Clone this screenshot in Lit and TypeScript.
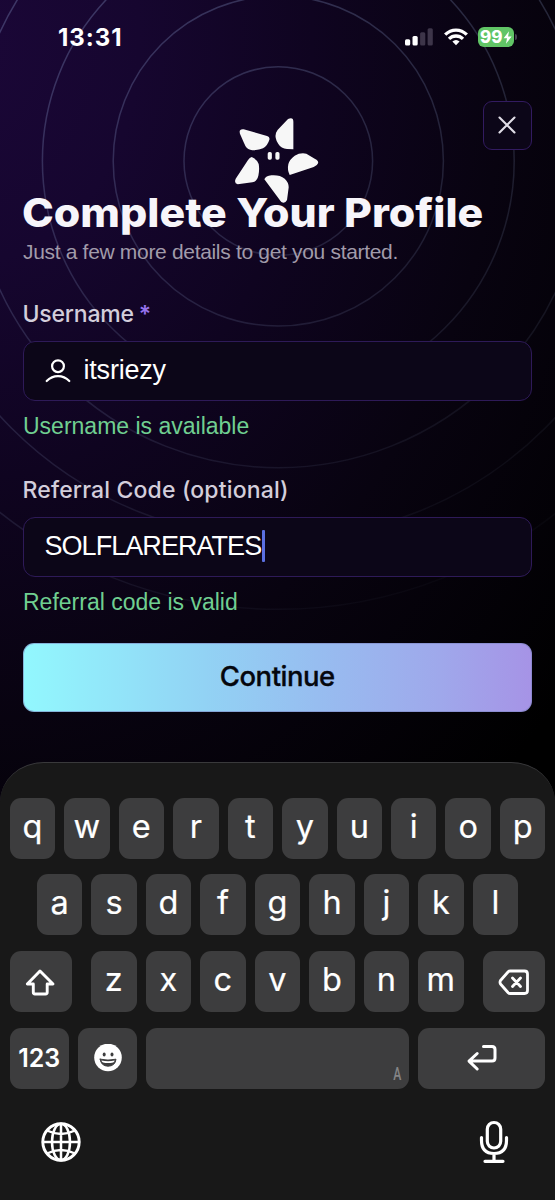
import { LitElement, html, svg, css } from "lit";
import { customElement, property } from "lit/decorators.js";

@customElement("status-bar")
class StatusBar extends LitElement {
  static styles = css`
    :host { display: flex; height: 74px; justify-content: space-between; align-items: center; padding: 0 38px 0 58px; box-sizing: border-box; color: #fff; }
    .time { font: 700 24px/30px Inter, sans-serif; letter-spacing: 0.95px; padding-top: 1px; }
    .right { display: flex; align-items: center; gap: 10.3px; }
    .battery { display: flex; align-items: center; gap: 1.5px; }
    .cell { display: flex; align-items: center; justify-content: center; width: 35.5px; height: 19.5px; border-radius: 6px; background: #61c566; font: 800 17px/19px Inter, sans-serif; }
    .nub { width: 2px; height: 6px; border-radius: 0 2px 2px 0; background: #45404f; }
    svg { display: block; }
  `;
  render() {
    return html`
      <span class="time">13:31</span>
      <div class="right">
        <svg width="28" height="18" viewBox="0 0 28 18">
          <rect x="0" y="11.3" width="5.2" height="6.2" rx="1.5" fill="#fff" />
          <rect x="7.5" y="8" width="5.2" height="9.5" rx="1.5" fill="#fff" />
          <rect x="15.1" y="4.3" width="5.2" height="13.2" rx="1.5" fill="#3d3549" />
          <rect x="22.6" y="0.3" width="5.2" height="17.2" rx="1.5" fill="#3d3549" />
        </svg>
        <svg width="24" height="18" viewBox="0 0 24 18" fill="none" stroke="#fff" stroke-width="3.3">
          <path d="M1.2 6.7C7.3 .5 16.7 .5 22.8 6.7" />
          <path d="M5 10.9C9 7 15 7 19 10.9" />
          <path d="M12 12Q14 12 15.6 13.6L12 17.3L8.4 13.6Q10 12 12 12Z" fill="#fff" stroke="none" />
        </svg>
        <div class="battery">
          <div class="cell">99<svg width="9" height="13" viewBox="0 0 9 13"><path d="M6 0.3L0.6 7.2H4L3 12.8L8.6 5.6H5.1Z" fill="#fff" /></svg></div>
          <div class="nub"></div>
        </div>
      </div>`;
  }
}

const ringIndexes = [0, 1, 2, 3, 4, 5];

@customElement("orbit-backdrop")
class OrbitBackdrop extends LitElement {
  static styles = css`
    :host { display: block; overflow: hidden; }
    svg { display: block; }
  `;
  render() {
    return html`<svg width="555" height="770" viewBox="0 0 555 770">
      <defs>
        <linearGradient id="fade" gradientUnits="userSpaceOnUse" x1="130" y1="0" x2="430" y2="600">
          <stop offset="0" stop-color="#8496c8" stop-opacity=".33" />
          <stop offset=".5" stop-color="#8090b8" stop-opacity=".19" />
          <stop offset="1" stop-color="#8090b0" stop-opacity=".03" />
        </linearGradient>
      </defs>
      <g fill="none" stroke="url(#fade)" stroke-width="1.5">
        ${ringIndexes.map((i) => svg`<circle cx="278.3" cy="161" r=${94.3 + i * 70.8} />`)}
      </g>
      <g transform="translate(179.700 90) scale(.33333)" fill="#f7f7f7">
        <path d="M192 118L262 138Q271 141 269 149Q264 166 250 175Q238 181 218 181Q204 179 197 168L181 132Q176 116 192 118Z" />
        <path d="M325 87Q341 80 341 95V178L322 177Q304 175 296 162Q284 145 289 128Q292 120 300 113Z" />
        <path d="M330 255Q322 240 326 222Q330 208 345 197Q362 187 380 191L405 206Q418 212 415 220Q413 227 402 231Z" />
        <path d="M254 268Q258 258 275 256Q300 254 315 266Q327 277 327 292L322 330Q316 342 305 336Q302 333 298 327Z" />
        <path d="M216 201Q232 208 237 222Q240 238 236 257Q232 274 218 277L174 283Q162 280 168 266L205 210Q210 202 216 201Z" />
        <rect x="264" y="186" width="12.5" height="23" rx="5" />
        <rect x="287" y="186" width="12.5" height="23" rx="5" />
      </g>
    </svg>`;
  }
}

@customElement("soft-keyboard")
class SoftKeyboard extends LitElement {
  @property({ type: Array }) rows = ["qwertyuiop", "asdfghjkl", "zxcvbnm"];
  static styles = css`
    :host { display: flex; flex-direction: column; box-sizing: border-box; height: 438px; padding: 34.700px 9.6px 0; background: #181818; border-top: 1.3px solid #39393b; border-radius: 44px 44px 0 0 / 40px 40px 0 0; color: #fff; font: 400 32.5px/61px Inter, sans-serif; gap: 15.7px; }
    .row { display: flex; height: 61px; gap: 9px; }
    .row.home { padding: 0 27.2px; }
    .key { flex: 1 1 0; display: flex; justify-content: center; align-items: center; height: 61px; background: #3d3d3e; border-radius: 11px; }
    .glyph { display: block; height: 61px; line-height: 57.5px; -webkit-text-stroke: 0.2px #fff; }
    .shift { flex: 0 0 62px; margin-right: 10.5px; }
    .delete { flex: 0 0 62.3px; margin-left: 10.5px; }
    .numbers { flex: 0 0 59.3px; font: 600 25px/61px Inter, sans-serif; }
    .emoji { flex: 0 0 59.6px; }
    .space { justify-content: flex-end; align-items: flex-end; }
    .hint { font: 500 19px/20px Roboto, sans-serif; color: #858587; transform: scaleX(0.64); margin: 0 5.5px 5px 0; }
    .enter { flex: 0 0 127.6px; }
    .tools { display: flex; justify-content: space-between; align-items: center; padding: 0 35px 0 31px; margin-top: 14px; height: 48px; }
    svg { display: block; fill: none; stroke: #fff; stroke-linecap: round; stroke-linejoin: round; }
  `;
  letters(row: string) {
    return [...row].map((l) => html`<div class="key"><span class="glyph">${l}</span></div>`);
  }
  render() {
    return html`
      <div class="row">${this.letters(this.rows[0])}</div>
      <div class="row home">${this.letters(this.rows[1])}</div>
      <div class="row">
        <div class="key shift">
          <svg width="32" height="28" viewBox="0 0 32 28" stroke-width="2.9"><path d="M15 3L28 16H22.2V24.3Q22.2 26 20.5 26H10Q8.300 26 8.300 24.300V16H2.300Z" /></svg>
        </div>
        ${this.letters(this.rows[2])}
        <div class="key delete">
          <svg width="32" height="28" viewBox="0 0 32 28" stroke-width="2.8"><path d="M12 3H26.500Q29.500 3 29.500 6V22.500Q29.500 25.500 26.500 25.500H12Q11 25.500 10.200 24.700L2.500 16Q1.500 14.300 2.500 12.500L10.200 3.800Q11 3 12 3ZM14.500 10L22.500 18.500M22.500 10L14.500 18.500" /></svg>
        </div>
      </div>
      <div class="row">
        <div class="key numbers">123</div>
        <div class="key emoji">
          <svg width="28" height="28" viewBox="0 0 28 28">
            <circle cx="14" cy="13.500" r="13.800" fill="#fff" stroke="none" />
            <ellipse cx="10.200" cy="10.400" rx="1.500" ry="2" fill="#3d3d3e" stroke="none" />
            <ellipse cx="18" cy="10.400" rx="1.500" ry="2" fill="#3d3d3e" stroke="none" />
            <path d="M6.200 15.200Q14 17 22 15.200Q21.200 22.100 14 22.200Q7 22.100 6.200 15.200Z" fill="#3d3d3e" stroke="#3d3d3e" stroke-width="1" />
            <path d="M7.400 16.500Q14 18.100 20.700 16.500Q20.300 18.200 19.200 18.500Q14 19.600 9 18.500Q7.700 18.100 7.400 16.500Z" fill="#fff" stroke="none" />
          </svg>
        </div>
        <div class="key space"><span class="hint">A</span></div>
        <div class="key enter">
          <svg width="32" height="30" viewBox="0 0 32 30" stroke-width="3"><path d="M17.500 3.500H26Q29 3.500 29 6.500V15Q29 18 26 18H3.500M11.200 10.500L3 18.100L11.200 26" /></svg>
        </div>
      </div>
      <div class="tools">
        <svg width="40" height="40" viewBox="0 0 40 40" stroke-width="2.500">
          <circle cx="20" cy="20" r="18.200" stroke-width="2.900" />
          <ellipse cx="20" cy="20" rx="9" ry="18.200" />
          <path d="M20 2V38M2 20H38M6 8.500Q20 15.500 34 8.500M6 31.500Q20 24.500 34 31.500" />
        </svg>
        <svg width="32" height="44" viewBox="0 0 32 44" stroke-width="3.200">
          <rect x="9.300" y="2.500" width="13.400" height="25.500" rx="6.700" />
          <path d="M3.500 17.500V20.500Q3.500 33.500 16 33.500Q28.500 33.500 28.500 20.500V17.500M16 34V41M7 41.300H25" />
        </svg>
      </div>`;
  }
}

@customElement("app-root")
class AppRoot extends LitElement {
  static styles = css`
    :host { display: block; position: relative; width: 555px; height: 1200px; overflow: hidden; background: radial-gradient(ellipse 640px 800px at -40px 40px, #1b0738 0%, #16062f 28%, #0f0420 55%, #080310 85%, #000 125%), #000; font-family: "Liberation Sans", Arial, sans-serif; color: #f7f5fa; }
    .backdrop { position: absolute; inset: 0 0 auto 0; }
    .screen { position: relative; display: flex; flex-direction: column; height: 1200px; }
    .content { display: flex; flex-direction: column; height: 688px; padding: 0 23.5px 0 23px; }
    .close { flex: none; align-self: flex-end; display: flex; align-items: center; justify-content: center; box-sizing: border-box; width: 48.500px; height: 48.500px; margin-top: 27px; border: 1.500px solid #321b60; border-radius: 9px; background: #0c0618; }
    svg { display: block; fill: none; stroke-linecap: round; stroke-linejoin: round; }
    h1 { margin: 38.500px 0 0 -1.500px; font: 800 40px/50px Inter, sans-serif; white-space: nowrap; transform: scaleX(1.07); transform-origin: 0 50%; }
    .subtitle { font-size: 21px; line-height: 30px; letter-spacing: -0.32px; color: #a19baa; margin-top: -1px; }
    .label { margin-top: 31.500px; font: 500 23px/30px Inter, sans-serif; color: #d3cedb; margin-left: -0.500px; }
    .username { letter-spacing: -0.2px; }
    .star { color: #9673ee; margin-left: 5px; font-weight: 600; }
    .field { display: flex; align-items: center; box-sizing: border-box; height: 60px; margin-top: 12.500px; padding: 0 20px 3px 20.500px; border: 1.500px solid #2e1a58; border-radius: 12px; background: #0c0618; font-size: 27px; line-height: 36px; color: #fff; }
    .person { margin: 3px 13px 0 0; }
    .name { letter-spacing: -0.200px; }
    .code { letter-spacing: -0.95px; }
    .caret { width: 3px; height: 32px; margin-left: 0.500px; background: #5b6fe0; border-radius: 1px; }
    .hint { margin-top: 9.500px; font-size: 23px; line-height: 30px; color: #70cf91; }
    .second { margin-top: 34px; letter-spacing: 0.150px; }
    .continue { display: flex; align-items: center; justify-content: center; box-sizing: border-box; height: 68.500px; margin-top: 26.500px; padding-bottom: 2px; border-radius: 11px; border: 1px solid rgba(120, 130, 190, 0.55); background: linear-gradient(90deg, #92f8fe, #92d2f4 36%, #97bdf0 58%, #9fa8eb 82%, #a693e6) border-box; color: #05070d; font: 500 27.500px/36px Inter, sans-serif; letter-spacing: -0.500px; -webkit-text-stroke: 0.3px #05070d; }
  `;
  render() {
    return html`
      <orbit-backdrop class="backdrop"></orbit-backdrop>
      <div class="screen">
        <status-bar></status-bar>
        <main class="content">
          <div class="close">
            <svg width="18" height="18" viewBox="0 0 18 18" stroke="#e0dde6" stroke-width="2.100"><path d="M1.500 1.500L16.500 16.500M16.500 1.500L1.500 16.500" /></svg>
          </div>
          <h1>Complete Your Profile</h1>
          <div class="subtitle">Just a few more details to get you started.</div>
          <div class="label username">Username<span class="star">*</span></div>
          <div class="field">
            <svg class="person" width="26" height="24" viewBox="0 0 26 24" stroke="#fff" stroke-width="2.200"><circle cx="13" cy="7.200" r="5.900" /><path d="M1.700 22Q6.500 17.100 13 17.100Q19.500 17.100 24.300 22" /></svg>
            <span class="name">itsriezy</span>
          </div>
          <div class="hint">Username is available</div>
          <div class="label second">Referral Code (optional)</div>
          <div class="field"><span class="code">SOLFLARERATES</span><span class="caret"></span></div>
          <div class="hint">Referral code is valid</div>
          <div class="continue">Continue</div>
        </main>
        <soft-keyboard></soft-keyboard>
      </div>`;
  }
}
